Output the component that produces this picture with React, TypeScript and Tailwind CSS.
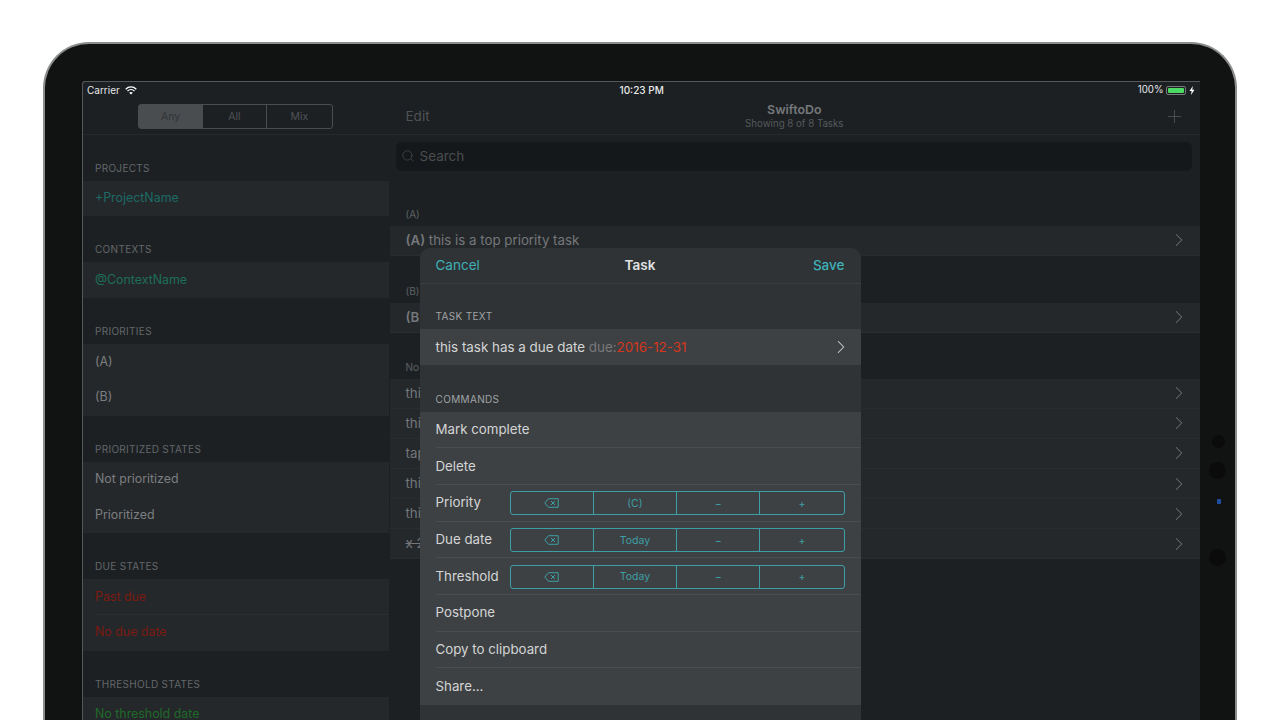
import { ChevronRight, Plus, Search } from "lucide-react";

function SideSection({ title, children }: { title: string; children: React.ReactNode }) {
  return (
    <div>
      <div className="h-[46px] flex items-end pb-[5px] pl-[12.5px] text-[10px] tracking-[0.3px] text-[#63676a]">{title}</div>
      <div className="bg-[#25282b] mr-px">{children}</div>
    </div>
  );
}

function SideRow({ text, color, sep }: { text: string; color: string; sep?: boolean }) {
  return (
    <div className="h-[35.75px] pl-[12.5px] relative flex items-center">
      <span className={`text-[12.4px] ${color}`}>{text}</span>
      {sep && <div className="absolute left-[13px] right-0 bottom-0 h-px bg-[#2c2f32]" />}
    </div>
  );
}

function TaskRow({ children }: { children: React.ReactNode }) {
  return (
    <div className="h-[30.1px] pl-[16px] pr-[10px] flex items-center justify-between bg-[#25282b] border-b border-[#2a2d30] text-[13.3px] text-[#74777a]">
      <span className="whitespace-nowrap pt-px">{children}</span>
      <ChevronRight size={22} strokeWidth={1.1} className="text-[#6b6e70]" />
    </div>
  );
}

function Label({ children, h }: { children: React.ReactNode; h: string }) {
  return <div className={`${h} flex items-end pb-[4px] pl-[16px] text-[10px] text-[#5d6164]`}>{children}</div>;
}

function BackspaceIcon() {
  return (
    <svg width="15" height="10" viewBox="0 0 15 10" fill="none" stroke="#3d9ea6" strokeWidth="1">
      <path d="M4.5 0.7H14.2V9.3H4.5L0.8 5Z" />
      <path d="M7 3L11 7M11 3L7 7" />
    </svg>
  );
}

function Segments({ middle }: { middle: string }) {
  return (
    <div className="w-[335px] h-[24px] grid grid-cols-4 border border-[#3d9ea6] rounded-[3px] text-[10.5px] text-[#3d9ea6]">
      <div className="flex items-center justify-center border-r border-[#3d9ea6]"><BackspaceIcon /></div>
      <div className="flex items-center justify-center border-r border-[#3d9ea6] pt-px">{middle}</div>
      <div className="flex items-center justify-center border-r border-[#3d9ea6] pt-px">−</div>
      <div className="flex items-center justify-center pt-px">+</div>
    </div>
  );
}

function CmdRow({ last, children }: { last?: boolean; children: React.ReactNode }) {
  return (
    <div className="h-[36.7px] pl-[16px] relative flex items-center text-[13.3px] text-[#d3d5d6]">
      {children}
      {!last && <div className="absolute left-[16px] right-0 bottom-0 h-px bg-[#4a4d4f]" />}
    </div>
  );
}

function SegRow({ label, middle }: { label: string; middle: string }) {
  return (
    <CmdRow>
      <span className="w-[74px]">{label}</span>
      <Segments middle={middle} />
    </CmdRow>
  );
}

export default function App() {
  return (
    <div className="h-[720px] w-[1280px] overflow-hidden bg-white pt-[42px] pl-[43px] font-['Inter',sans-serif]">
      <div className="relative w-[1194px] h-[760px] rounded-t-[46px] bg-[#111212] border-[2.5px] border-b-0 border-[#8b8c8e] pt-[36.5px] pl-[36.5px]">
        <div className="absolute left-[1166.5px] top-[390.5px] w-[13px] h-[13px] rounded-full bg-[#0b0b0b]" />
        <div className="absolute left-[1163.5px] top-[417.5px] w-[17px] h-[17px] rounded-full bg-[#0b0b0b]" />
        <div className="absolute left-[1171.5px] top-[455px] w-[4px] h-[5px] rounded-[1px] bg-[#1f4da3]" />
        <div className="absolute left-[1163.5px] top-[504.5px] w-[17px] h-[17px] rounded-full bg-[#0b0b0b]" />

        <div className="relative w-[1118px] h-[700px] bg-[#1c2023] border-t border-l border-[#55585a] rounded-tl-[3px] overflow-hidden">
          <div className="h-[18px] pl-[4.5px] pr-[5px] flex items-center justify-between text-[10px] text-[#e8e9e9] relative">
            <div className="flex items-center gap-[5px]">
              <span>Carrier</span>
              <svg width="12" height="9" viewBox="0 0 12 9" fill="none" stroke="white" strokeWidth="1.3">
                <path d="M0.7 3.2C3.7 0.2 8.3 0.2 11.3 3.2" />
                <path d="M2.5 5C4.5 3.1 7.5 3.1 9.5 5" />
                <path d="M6 8.6L4.2 6.7C5.3 5.8 6.7 5.8 7.8 6.7Z" fill="white" stroke="none" />
              </svg>
            </div>
            <span className="absolute left-[537px] font-medium">10:23 PM</span>
            <div className="flex items-center gap-[2px]">
              <span className="text-[9.7px]">100%</span>
              <div className="w-[20px] h-[9px] rounded-[2px] border border-[#77797a] p-px">
                <div className="w-full h-full bg-[#4cd964] rounded-[1px]" />
              </div>
              <svg width="6" height="9" viewBox="0 0 6 9" fill="white" className="ml-[1px]">
                <path d="M3.8 0L0.5 5H2.6L2 9L5.5 3.8H3.3Z" />
              </svg>
            </div>
          </div>

          <div className="flex">
            <div className="w-[307px] shrink-0">
              <div className="h-[35px] border-b border-[#262a2d] flex justify-center items-center pr-[2px]">
                <div className="w-[195px] h-[25px] grid grid-cols-3 border border-[#4a4d50] rounded-[3px] text-[10.5px] text-[#4f5255]">
                  <div className="bg-[#4a4d50] text-[#303336] flex items-center justify-center">Any</div>
                  <div className="border-r border-[#4a4d50] flex items-center justify-center">All</div>
                  <div className="flex items-center justify-center">Mix</div>
                </div>
              </div>
              <SideSection title="PROJECTS"><SideRow text="+ProjectName" color="text-[#1c6b66]" /></SideSection>
              <SideSection title="CONTEXTS"><SideRow text="@ContextName" color="text-[#1c6f57]" /></SideSection>
              <SideSection title="PRIORITIES">
                <SideRow text="(A)" color="text-[#7b7e80]" />
                <SideRow text="(B)" color="text-[#7b7e80]" />
              </SideSection>
              <SideSection title="PRIORITIZED STATES">
                <SideRow text="Not prioritized" color="text-[#7b7e80]" />
                <SideRow text="Prioritized" color="text-[#7b7e80]" />
              </SideSection>
              <SideSection title="DUE STATES">
                <SideRow text="Past due" color="text-[#7a1a10]" sep />
                <SideRow text="No due date" color="text-[#7a1a10]" />
              </SideSection>
              <SideSection title="THRESHOLD STATES">
                <SideRow text="No threshold date" color="text-[#1f6a28]" />
              </SideSection>
            </div>

            <div className="flex-1">
              <div className="h-[35px] border-b border-[#262a2d] pl-[14.5px] pr-[14.5px] flex items-center">
                <span className="flex-1 pl-[1.5px] text-[13.5px] text-[#4f5255]">Edit</span>
                <div className="text-center leading-none pr-[2px]">
                  <div className="text-[12.4px] font-semibold text-[#75787a] leading-[14px]">SwiftoDo</div>
                  <div className="text-[9.7px] text-[#56595c] leading-[12px] pt-px">Showing 8 of 8 Tasks</div>
                </div>
                <div className="flex-1 flex justify-end">
                  <Plus size={21} strokeWidth={0.9} className="text-[#54575a]" />
                </div>
              </div>
              <div className="ml-[6px] mr-[8px] mt-[7px] h-[29px] rounded-[6px] bg-[#15181a] flex items-center pl-[5px] gap-[5px] text-[13.5px] text-[#4a4d50]">
                <Search size={14} strokeWidth={1.3} />
                <span>Search</span>
              </div>
              <Label h="h-[55px]">(A)</Label>
              <TaskRow><b className="font-semibold">(A)</b> this is a top priority task</TaskRow>
              <Label h="h-[47px]">(B)</Label>
              <TaskRow><b className="font-semibold">(B)</b> this is a lower priority task</TaskRow>
              <Label h="h-[46px]">No priority</Label>
              <TaskRow>this task has a project +ProjectName</TaskRow>
              <TaskRow>this task has a context @ContextName</TaskRow>
              <TaskRow>tap a task to edit it</TaskRow>
              <TaskRow>this task has a due date due:2016-12-31</TaskRow>
              <TaskRow>this task has a threshold t:2016-12-31</TaskRow>
              <TaskRow><span className="line-through">x 2016-12-31 a completed task</span></TaskRow>
            </div>
          </div>

          <div className="absolute left-[337px] top-[166px] w-[441px] h-[540px] rounded-t-[10px] bg-[#2f3336]">
            <div className="h-[36px] px-[16px] border-b border-[#3a3e40] flex items-center text-[13.5px]">
              <span className="flex-1 text-[#3fb0b8]">Cancel</span>
              <span className="font-semibold text-[#e2e3e4]">Task</span>
              <span className="flex-1 text-right font-medium text-[#3fb0b8]">Save</span>
            </div>
            <div className="h-[45px] flex items-end pb-[5px] pl-[16px] text-[10px] tracking-[0.35px] text-[#a0a3a5]">TASK TEXT</div>
            <div className="h-[36px] bg-[#3e4143] pl-[16px] pr-[9px] flex items-center justify-between text-[13.4px] text-[#d3d5d6]">
              <span className="pt-px">this task has a due date <span className="text-[#77797b]">due:</span><span className="text-[#d8351c]">2016-12-31</span></span>
              <ChevronRight size={22} strokeWidth={1.1} className="text-[#d3d5d6]" />
            </div>
            <div className="h-[47px] flex items-end pb-[5px] pl-[16px] text-[10px] tracking-[0.35px] text-[#a0a3a5]">COMMANDS</div>
            <div className="bg-[#3e4143]">
              <CmdRow>Mark complete</CmdRow>
              <CmdRow>Delete</CmdRow>
              <SegRow label="Priority" middle="(C)" />
              <SegRow label="Due date" middle="Today" />
              <SegRow label="Threshold" middle="Today" />
              <CmdRow>Postpone</CmdRow>
              <CmdRow>Copy to clipboard</CmdRow>
              <CmdRow last>Share...</CmdRow>
            </div>
          </div>
        </div>
      </div>
    </div>
  );
}
